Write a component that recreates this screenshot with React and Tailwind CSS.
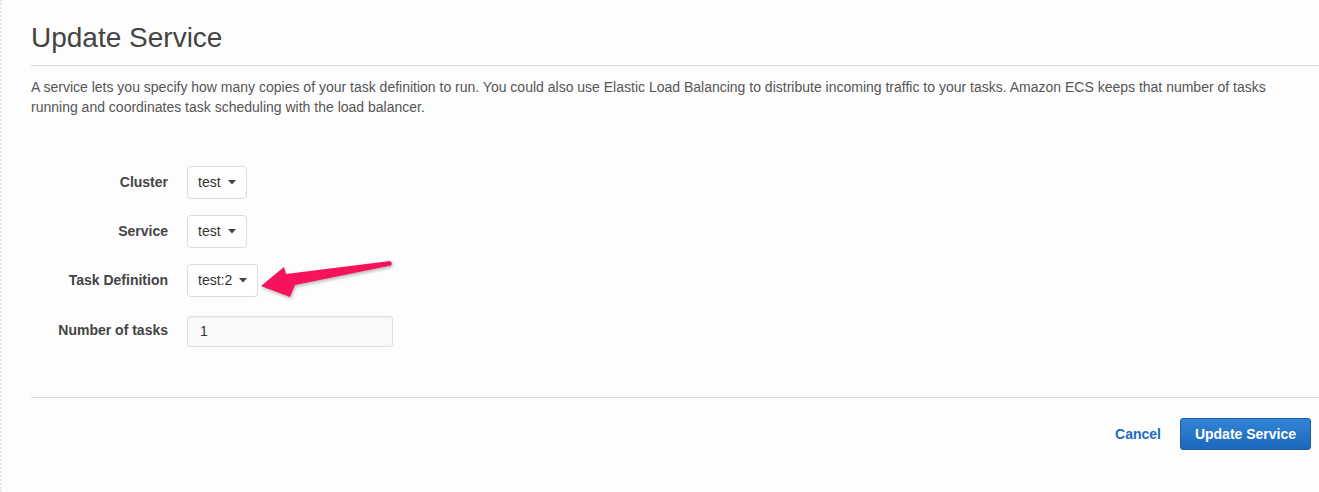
import React from "react";

function Caret() {
  return (
    <svg width="8" height="5" viewBox="0 0 8 5" className="ml-[7px]">
      <path d="M0 0 L8 0 L4 4.5 Z" fill="#444" />
    </svg>
  );
}

function Dropdown({ value }) {
  return (
    <div className="inline-flex items-center h-[33px] px-[10px] border border-[#dcdcdc] rounded-[4px] bg-white text-[14px] text-[#333]">
      {value}
      <Caret />
    </div>
  );
}

function Row({ label, children }) {
  return (
    <div className="flex items-center">
      <div className="w-[137px] text-right font-bold text-[14px] text-[#444]">{label}</div>
      <div className="ml-[19px]">{children}</div>
    </div>
  );
}

export default function App() {
  return (
    <div
      className="relative w-[1319px] h-[492px] bg-[#fdfdfd] border-l-2 border-dotted border-[#e4e8ee] overflow-hidden"
      style={{ fontFamily: '"Liberation Sans", Arial, sans-serif' }}
    >
      <div className="pl-[29px]">
        <h1 className="pt-[22px] pb-[11px] text-[28px] leading-[32px] text-[#444] font-normal">
          Update Service
        </h1>
        <div className="border-t border-[#d9dcdd]" />
        <p className="pt-[11px] pr-[40px] text-[14px] leading-[20px] text-[#555]">
          A service lets you specify how many copies of your task definition to run. You could also use
          Elastic Load Balancing to distribute incoming traffic to your tasks. Amazon ECS keeps that number of
          tasks running and coordinates task scheduling with the load balancer.
        </p>

        <div className="flex flex-col gap-[16px] pt-[49px] pb-[50px]">
          <Row label="Cluster">
            <Dropdown value="test" />
          </Row>
          <Row label="Service">
            <Dropdown value="test" />
          </Row>
          <Row label="Task Definition">
            <Dropdown value="test:2" />
          </Row>
          <Row label="Number of tasks">
            <div className="w-[206px] h-[31px] mt-[3px] flex items-center px-[12px] border border-[#dde1e4] rounded-[3px] bg-[#f8fafb] shadow-[inset_0_1px_2px_rgba(0,0,0,0.05)] text-[14px] text-[#333]">
              1
            </div>
          </Row>
        </div>

        <div className="border-t border-[#d9dcdd]" />

        <div className="flex items-center justify-end gap-[19px] pt-[20px] pr-[8px]">
          <button className="text-[14px] font-bold text-[#1f6bbf]">Cancel</button>
          <button className="h-[32px] w-[131px] rounded-[3px] border border-[#1a5fa8] bg-gradient-to-b from-[#3384d6] to-[#1b68bb] text-white text-[14px] font-bold">
            Update Service
          </button>
        </div>
      </div>

      <svg
        className="absolute left-[248px] top-[250px]"
        width="150"
        height="55"
        viewBox="0 0 150 55"
        style={{ filter: "drop-shadow(1px 2px 1.5px rgba(0,0,0,0.25))" }}
      >
        <path
          d="M11 36 L34 17 L36 24 L140 11 Q143 13 141 15.5 L45 35 L40 47 Z"
          fill="#f7135c"
          strokeLinejoin="round"
        />
      </svg>
    </div>
  );
}
